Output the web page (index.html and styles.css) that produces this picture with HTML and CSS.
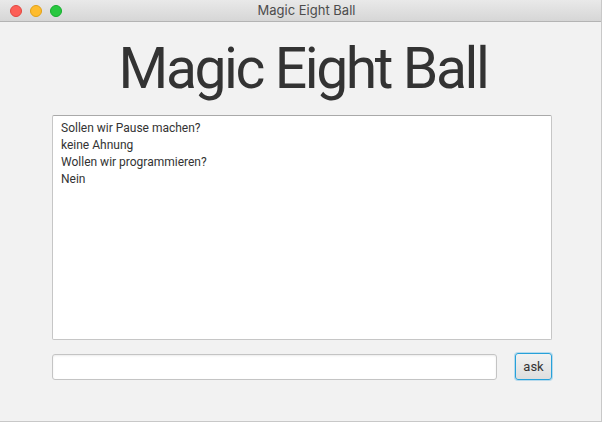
FILE: index.html
```html
<!DOCTYPE html>
<html>
<head>
<meta charset="utf-8">
<link rel="stylesheet" href="styles.css">
</head>
<body>
<div class="window">
  <div class="titlebar">
    <div class="lights">
      <span class="light red"></span>
      <span class="light yellow"></span>
      <span class="light green"></span>
    </div>
    <div class="title">Magic Eight Ball</div>
  </div>
  <div class="content">
    <h1 class="heading">Magic Eight Ball</h1>
    <div class="log">
      <div>Sollen wir Pause machen?</div>
      <div>keine Ahnung</div>
      <div>Wollen wir programmieren?</div>
      <div>Nein</div>
    </div>
    <div class="inputrow">
      <div class="field"></div>
      <button class="ask">ask</button>
    </div>
  </div>
</div>
</body>
</html>
```

FILE: styles.css
```css
html, body {
  margin: 0;
  padding: 0;
  background: #f2f2f2;
}
body {
  width: 602px;
  height: 422px;
  overflow: hidden;
  font-family: Inter, "Noto Sans", sans-serif;
  color: #333;
}
.window {
  width: 601px;
  height: 421px;
  background: #f2f2f2;
  border-right: 1px solid #c8c8c8;
  border-bottom: 1px solid #c8c8c8;
  display: flex;
  flex-direction: column;
}
.titlebar {
  height: 21px;
  flex: none;
  background: linear-gradient(#e9e9e9, #d6d6d6);
  border-bottom: 1px solid #b4b4b4;
  display: flex;
  align-items: center;
  position: relative;
}
.lights {
  display: flex;
  gap: 8px;
  padding-left: 10px;
}
.light {
  width: 12px;
  height: 12px;
  border-radius: 50%;
  display: block;
}
.red { background: #fd5f57; border: 0.5px solid #e2463f; box-sizing: border-box; }
.yellow { background: #febc2e; border: 0.5px solid #e1a116; box-sizing: border-box; }
.green { background: #28c840; border: 0.5px solid #14ae2c; box-sizing: border-box; }
.title {
  position: absolute;
  left: 0;
  right: 0;
  top: 0;
  line-height: 21px;
  text-align: center;
  font-size: 13px;
  color: #4c4c4c;
  padding-left: 12px;
}
.content {
  flex: 1;
  display: flex;
  flex-direction: column;
  padding: 0 49px 0 52px;
}
.heading {
  margin: 11px 0 0 0;
  font-family: Roboto, sans-serif;
  font-weight: 400;
  font-size: 57px;
  line-height: 72px;
  height: 82px;
  text-align: center;
  color: #333;
  letter-spacing: -2.4px;
  text-indent: 2px;
}
.log {
  height: 225px;
  background: #fff;
  border: 1px solid #c6c6c6;
  border-top-color: #a9a9a9;
  border-radius: 2px;
  box-sizing: border-box;
  padding: 4px 8px;
  font-family: Roboto, sans-serif;
  font-size: 12px;
  line-height: 17px;
  color: #333;
}
.inputrow {
  margin-top: 13px;
  display: flex;
  align-items: center;
  gap: 18px;
}
.field {
  flex: 1;
  height: 26px;
  box-sizing: border-box;
  background: #fff;
  border: 1px solid #c4c4c4;
  border-radius: 3px;
  box-shadow: inset 0 1px 2px rgba(0,0,0,0.08);
}
.ask {
  width: 37px;
  height: 27px;
  box-sizing: border-box;
  border: 1px solid #27a1d9;
  border-radius: 3px;
  background: linear-gradient(#f2f2f2, #dedede);
  box-shadow: 0 0 0 1px rgba(72, 175, 230, 0.35);
  font-family: Roboto, sans-serif;
  font-size: 13px;
  color: #333;
  padding: 0;
}
```
